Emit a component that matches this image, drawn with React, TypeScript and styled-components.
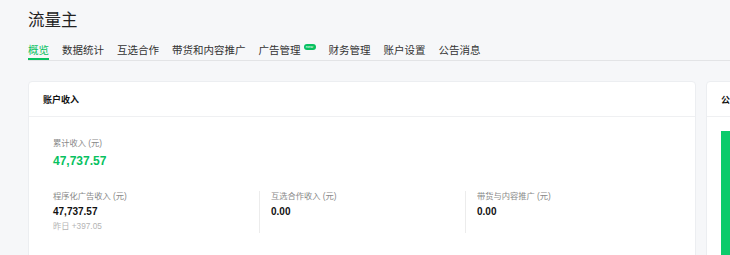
import React from "react";
import styled, { createGlobalStyle } from "styled-components";

const GlobalStyle = createGlobalStyle`
  html, body {
    margin: 0;
    padding: 0;
    background: #f6f7f9;
    overflow: hidden;
  }
  body {
    font-family: "Liberation Sans", "Noto Sans CJK SC", sans-serif;
    color: #333;
  }
`;

const Page = styled.div`
  width: 730px;
  height: 255px;
  overflow: hidden;
  padding: 8px 0 0 28px;
  box-sizing: border-box;
`;

const Title = styled.h1`
  margin: 0;
  font-size: 16.5px;
  line-height: 24px;
  font-weight: 400;
  color: #222;
`;

const Tabs = styled.nav`
  margin-top: 11px;
  display: flex;
  gap: 13px;
  border-bottom: 1px solid #e3e4e6;
`;

const Tab = styled.div<{ $active?: boolean }>`
  display: flex;
  align-items: flex-start;
  font-size: 10.5px;
  line-height: 14px;
  padding-bottom: 1px;
  border-bottom: 2px solid ${(p) => (p.$active ? "#07c160" : "transparent")};
  color: ${(p) => (p.$active ? "#07c160" : "#333")};
  white-space: nowrap;
`;

const Badge = styled.span`
  margin: 1px 0 0 3px;
  width: 12px;
  height: 6px;
  border-radius: 3px;
  background: #07c160;
  color: #fff;
  font-size: 4px;
  line-height: 6px;
  text-align: center;
`;

const Cards = styled.div`
  margin-top: 20px;
  display: flex;
  gap: 10px;
`;

const Card = styled.section<{ $width: number }>`
  flex: 0 0 ${(p) => p.$width}px;
  height: 200px;
  background: #fff;
  border: 1px solid #eceef1;
  border-radius: 4px;
  box-sizing: border-box;
`;

const CardHeader = styled.div`
  height: 35px;
  padding: 0 14px;
  display: flex;
  align-items: center;
  border-bottom: 1px solid #eff0f2;
  box-sizing: border-box;
  font-size: 9px;
  font-weight: 700;
  color: #111;
`;

const CardBody = styled.div`
  padding: 21px 24px 0;
`;

const Label = styled.div`
  font-size: 8.25px;
  line-height: 12px;
  color: #888;
`;

const Total = styled.div`
  margin-top: 3px;
  font-size: 12px;
  line-height: 16px;
  font-weight: 700;
  color: #07c160;
`;

const Columns = styled.div`
  margin-top: 22px;
  display: grid;
  grid-template-columns: repeat(3, 1fr);
`;

const Column = styled.div<{ $first?: boolean }>`
  padding-left: ${(p) => (p.$first ? 0 : 11)}px;
  border-left: ${(p) => (p.$first ? "none" : "1px solid #ececec")};
`;

const Value = styled.div`
  margin-top: 2px;
  font-size: 10px;
  line-height: 14px;
  font-weight: 700;
  color: #111;
`;

const Sub = styled.div`
  margin-top: 2px;
  font-size: 8.25px;
  line-height: 12px;
  color: #b4b4b4;
`;

const GreenBar = styled.div`
  margin: 14px 0 0 14px;
  width: 300px;
  height: 150px;
  background: #0bcb6b;
`;

const tabs = ["概览", "数据统计", "互选合作", "带货和内容推广", "广告管理", "财务管理", "账户设置", "公告消息"];

export default function App() {
  return (
    <>
      <GlobalStyle />
      <Page>
        <Title>流量主</Title>
        <Tabs>
          {tabs.map((t, i) => (
            <Tab key={t} $active={i === 0}>
              {t}
              {t === "广告管理" && <Badge>new</Badge>}
            </Tab>
          ))}
        </Tabs>
        <Cards>
          <Card $width={668}>
            <CardHeader>账户收入</CardHeader>
            <CardBody>
              <Label>累计收入 (元)</Label>
              <Total>47,737.57</Total>
              <Columns>
                <Column $first>
                  <Label>程序化广告收入 (元)</Label>
                  <Value>47,737.57</Value>
                  <Sub>昨日 +397.05</Sub>
                </Column>
                <Column>
                  <Label>互选合作收入 (元)</Label>
                  <Value>0.00</Value>
                </Column>
                <Column>
                  <Label>带货与内容推广 (元)</Label>
                  <Value>0.00</Value>
                </Column>
              </Columns>
            </CardBody>
          </Card>
          <Card $width={320}>
            <CardHeader>公告</CardHeader>
            <GreenBar />
          </Card>
        </Cards>
      </Page>
    </>
  );
}
